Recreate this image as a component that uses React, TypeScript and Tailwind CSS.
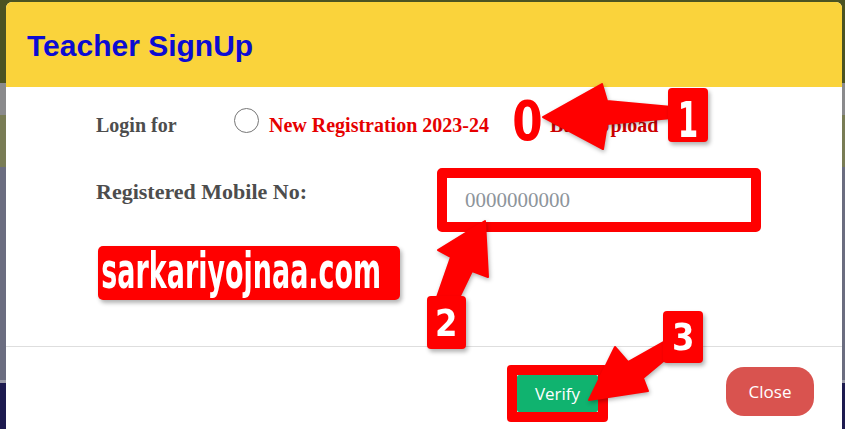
import React from "react";

export default function App() {
  return (
    <div className="relative w-[845px] h-[429px] overflow-hidden">
      {/* page backdrop seen around the dialog */}
      <div className="flex flex-col w-full h-full">
        <div className="h-[83px] bg-[#4b5322]" />
        <div className="h-[32px] bg-[#8a8a8c]" />
        <div className="h-[52px] bg-[#797c55]" />
        <div className="h-[213px] bg-[#6b6d80]" />
        <div className="h-[3px] bg-[#9a9aa8]" />
        <div className="flex-1 bg-[#1d1a4f]" />
      </div>

      {/* dialog */}
      <div className="absolute left-[6px] top-[2px] w-[836px] h-[440px] bg-white rounded-t-[6px] overflow-hidden flex flex-col">
        <div className="h-[85px] shrink-0 bg-[#fad33b] flex items-center pl-[21px] pt-[2px]">
          <h1 className="font-['Liberation_Sans',Arial,sans-serif] font-bold text-[30px] leading-none text-[#0c0cd2]">
            Teacher SignUp
          </h1>
        </div>

        <div className="h-[259px] shrink-0 pl-[90px] pt-[8px] flex flex-col gap-[23px] font-['Liberation_Serif','Times_New_Roman',serif] font-bold">
          <div className="h-[50px] flex items-center">
            <span className="w-[138px] pt-[10px] text-[20px] leading-none text-[#4d4d4d]">Login for</span>
            <span className="w-[25px] h-[25px] rounded-full border-[1.5px] border-[#767676] bg-white" />
            <span className="ml-[10px] pt-[10px] text-[20px] leading-none text-[#e60000]">New Registration 2023-24</span>
            <span className="ml-[26px] w-[25px] h-[25px] rounded-full border-[1.5px] border-[#767676] bg-white" />
            <span className="ml-[10px] pt-[10px] text-[20px] leading-none text-[#cc0000]">Bulk Upload</span>
          </div>

          <div className="h-[64px] flex items-start">
            <span className="w-[341px] pt-[13px] text-[22px] leading-none text-[#4d4d4d]">Registered Mobile No:</span>
            <div className="w-[324px] h-[64px] border-[10px] border-[#ff0000] rounded-[5px] bg-white">
              <input
                readOnly
                placeholder="0000000000"
                className="w-full h-full bg-white outline-none pl-[18px] font-['Liberation_Serif',serif] font-normal text-[21px] text-[#555] placeholder:text-[#8e959b]"
              />
            </div>
          </div>
        </div>

        <div className="border-t border-[#dedede] flex justify-end items-start gap-[118px] pr-[28px] font-['Open_Sans',sans-serif]">
          <div className="mt-[18px] w-[101px] h-[57px] border-[10px] border-[#ff0000] rounded-[4px]">
            <button className="w-full h-full bg-[#10b36f] rounded-[2px] text-white text-[17px] leading-none">
              Verify
            </button>
          </div>
          <button className="mt-[20px] w-[88px] h-[49px] bg-[#d9534f] rounded-[18px] text-white text-[17px] leading-none">
            Close
          </button>
        </div>
      </div>

      {/* watermark */}
      <div className="absolute left-[98px] top-[246px] w-[302px] h-[54px] bg-[#ff0000] rounded-[5px] shadow-[2px_3px_4px_rgba(0,0,0,0.3)]">
        <span className="block w-max pl-[6px] pt-[1px] whitespace-nowrap font-['DejaVu_Sans',sans-serif] font-bold text-[49px] leading-none text-white scale-x-[0.55] origin-left">
          sarkariyojnaa.com
        </span>
      </div>

      {/* "0" mark over second radio */}
      <div className="absolute left-[513px] top-[100px] w-[29px] h-[42px] bg-white flex items-center justify-center">
        <span className="font-['DejaVu_Sans',sans-serif] font-bold text-[56px] leading-none text-[#ff0000] scale-x-[0.78]">0</span>
      </div>

      {/* arrows */}
      <svg
        className="absolute left-0 top-0 drop-shadow-[1px_2px_2px_rgba(0,0,0,0.3)]"
        width="845"
        height="429"
        viewBox="0 0 845 429"
      >
        <polygon
          points="543,117 602,84 607,101 672,107 672,118 607,124 603,149"
          fill="#ff0000"
          stroke="#ff0000"
          strokeWidth="2"
          strokeLinejoin="round"
        />
        <polygon
          points="485,221 488,277 472,271 458,300 436,300 451,257 438,250"
          fill="#ff0000"
          stroke="#ff0000"
          strokeWidth="2"
          strokeLinejoin="round"
        />
        <polygon
          points="589,400 615,347 628,362 667,340 667,358 643,378 648,391"
          fill="#ff0000"
          stroke="#ff0000"
          strokeWidth="2"
          strokeLinejoin="round"
        />
      </svg>

      {/* numbered boxes */}
      <div className="absolute left-[668px] top-[88px] w-[40px] h-[54px] bg-[#ff0000] rounded-[4px] shadow-[2px_3px_4px_rgba(0,0,0,0.3)] flex items-center justify-center pt-[10px]">
        <span className="font-['DejaVu_Sans',sans-serif] font-bold text-[49px] leading-none text-white scale-x-[0.6]">1</span>
      </div>
      <div className="absolute left-[427px] top-[296px] w-[39px] h-[53px] bg-[#ff0000] rounded-[4px] shadow-[2px_3px_4px_rgba(0,0,0,0.3)] flex items-center justify-center">
        <span className="font-['DejaVu_Sans',sans-serif] font-bold text-[38px] leading-none text-white scale-x-[0.85]">2</span>
      </div>
      <div className="absolute left-[663px] top-[311px] w-[40px] h-[52px] bg-[#ff0000] rounded-[4px] shadow-[2px_3px_4px_rgba(0,0,0,0.3)] flex items-center justify-center">
        <span className="font-['DejaVu_Sans',sans-serif] font-bold text-[38px] leading-none text-white scale-x-[0.85]">3</span>
      </div>
    </div>
  );
}
